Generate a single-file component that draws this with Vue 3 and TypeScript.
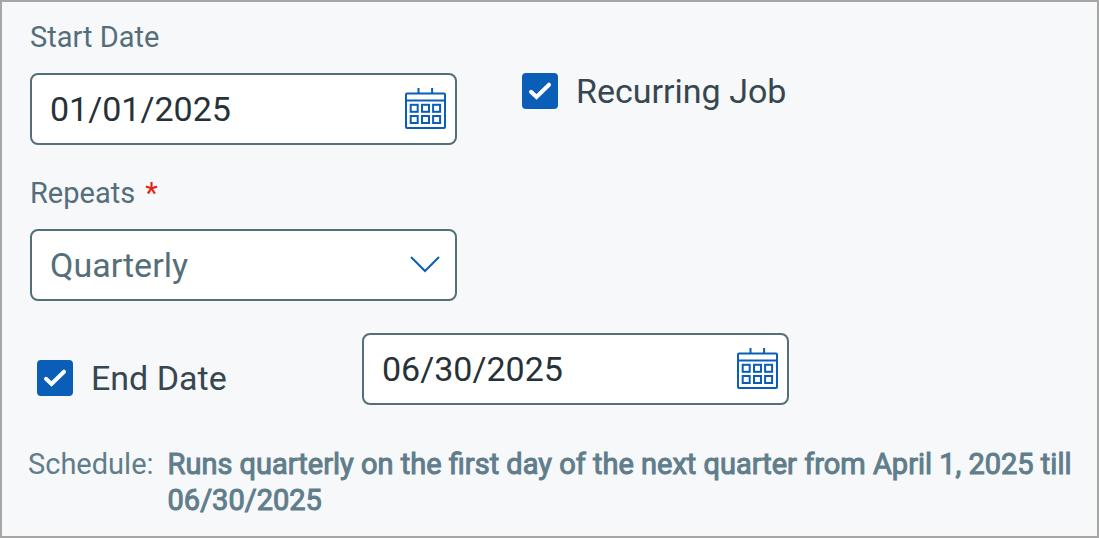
<script setup lang="ts">
import { ref } from 'vue'

const startDate = ref('01/01/2025')
const endDate = ref('06/30/2025')
const recurring = ref(true)
const hasEnd = ref(true)
const repeats = ref('Quarterly')
const options: string[] = ['Daily', 'Weekly', 'Monthly', 'Quarterly', 'Yearly']
const cells = [5.7, 17, 28.1].flatMap((x) => [16.8, 28].map((y) => ({ x, y })))
</script>

<template>
  <form class="panel" @submit.prevent>
    <div class="row top">
      <div class="field">
        <label class="label" for="start">Start Date</label>
        <div class="box">
          <input id="start" v-model="startDate" type="text" />
          <button type="button" class="pick" aria-label="Choose start date">
            <svg viewBox="0 0 41 42" class="calendar">
              <rect x="1" y="5.4" width="39" height="34.6" rx="1" />
              <path d="M1 12.4H40M13.5 0V5M27.1 0V5" />
              <rect v-for="(c, i) in cells" :key="i" :x="c.x" :y="c.y" width="7" height="7" />
            </svg>
          </button>
        </div>
      </div>
      <label class="check recurring">
        <input v-model="recurring" type="checkbox" />
        <svg viewBox="0 0 36 36" class="tick"><path d="M9 18.8L14.5 24L27 11.7" /></svg>
        <span>Recurring Job</span>
      </label>
    </div>
    <div class="field repeats">
      <label class="label" for="repeats">Repeats <span class="required">*</span></label>
      <div class="box">
        <select id="repeats" v-model="repeats">
          <option v-for="o in options" :key="o">{{ o }}</option>
        </select>
        <svg viewBox="0 0 30 18" class="chevron"><path d="M1 1L15 15L29 1" /></svg>
      </div>
    </div>
    <div class="row end">
      <label class="check">
        <input v-model="hasEnd" type="checkbox" />
        <svg viewBox="0 0 36 36" class="tick"><path d="M9 18.8L14.5 24L27 11.7" /></svg>
        <span>End Date</span>
      </label>
      <div class="box">
        <input v-model="endDate" type="text" aria-label="End date" />
        <button type="button" class="pick" aria-label="Choose end date">
          <svg viewBox="0 0 41 42" class="calendar">
            <rect x="1" y="5.4" width="39" height="34.6" rx="1" />
            <path d="M1 12.4H40M13.5 0V5M27.1 0V5" />
            <rect v-for="(c, i) in cells" :key="i" :x="c.x" :y="c.y" width="7" height="7" />
          </svg>
        </button>
      </div>
    </div>
    <div class="schedule">
      <span>Schedule:</span>
      <strong>Runs quarterly on the first day of the next quarter from April 1, 2025 till 06/30/2025</strong>
    </div>
  </form>
</template>

<style>
body { margin: 0; background: #f7f8fa; }
</style>
<style scoped>
* { box-sizing: border-box; }
.panel { min-height: 100vh; padding: 18px 12px 18px 28px; border: 2px solid #a6a6a6; background: #f7f8fa; font-family: Roboto, sans-serif; color: #546e7a; }
.row { display: flex; }
.field { width: 427px; }
.label { display: block; height: 53px; font-size: 29px; line-height: 34px; }
.required { color: #e62010; margin-left: 3px; }
.box { position: relative; display: flex; align-items: center; width: 427px; height: 72px; border: 2px solid #546e7a; border-radius: 8px; background: #fff; }
.box input, .box select { flex: 1; min-width: 0; width: 100%; height: 100%; padding: 0 18px; border: 0; border-radius: 6px; background: transparent; font: 34px Roboto, sans-serif; color: #263238; }
.box select { appearance: none; color: #546e7a; }
.pick { flex: none; padding: 0; margin-right: 9px; border: 0; background: none; }
svg { display: block; fill: none; stroke: #0a5eb8; stroke-width: 2; }
.calendar { width: 41px; height: 42px; }
.chevron { position: absolute; right: 15px; width: 30px; height: 18px; pointer-events: none; }
.check { position: relative; display: flex; align-items: center; gap: 18px; height: 36px; font-size: 34px; color: #37474f; }
.check input { appearance: none; width: 36px; height: 36px; margin: 0; border: 2px solid #0a5eb8; border-radius: 4px; background: #fff; }
.check input:checked { background: #0a5eb8; }
.tick { position: absolute; left: 0; width: 36px; height: 36px; stroke: #fff; stroke-width: 4; stroke-linecap: round; pointer-events: none; }
.recurring { margin: 53px 0 0 65px; }
.repeats { margin-top: 31px; }
.end { margin-top: 32px; padding-left: 7px; align-items: center; }
.end .check { width: 325px; margin-top: 18px; }
.schedule { display: flex; gap: 14px; margin: 41px 0 0 -2px; font-size: 29px; line-height: 36px; color: #607d8b; }
.schedule strong { font-weight: 400; -webkit-text-stroke: 1px currentColor; }
</style>
